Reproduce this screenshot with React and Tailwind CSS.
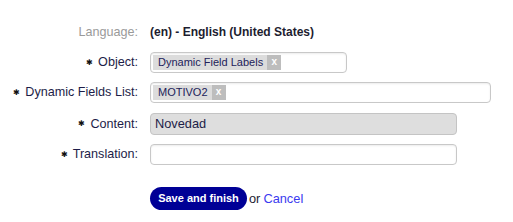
export default function App() {
  const font = { fontFamily: '"Liberation Sans", Arial, sans-serif' };
  const Label = ({ children, req, gray }) => (
    <div className="w-[138px] shrink-0 flex items-center justify-end">
      {req && <span className="text-[8px] text-[#111] mr-[5px] leading-none">✱</span>}
      <span className={`text-[12.6px] leading-none ${gray ? "text-[#9a9a9a]" : "text-[#1d1d48]"}`}>{children}</span>
    </div>
  );
  const Tag = ({ children }) => (
    <div className="flex items-stretch h-[15px] bg-[#dcdcdc] ml-[2px]">
      <span className="pl-[5px] pr-[4px] text-[11px] leading-[15px] text-[#22225a]">{children}</span>
      <span className="w-[14px] bg-[#bdbdbd] text-white text-[10px] font-bold leading-[14px] text-center">x</span>
    </div>
  );
  return (
    <div className="w-[513px] h-[222px] bg-white relative" style={font}>
      <div className="flex flex-col pt-[21px]">
        <div className="flex h-[22px] items-center">
          <Label gray>Language:</Label>
          <div className="ml-[12px] text-[12px] font-bold text-[#1d1d30]">(en) - English (United States)</div>
        </div>
        <div className="flex h-[21px] mt-[9px]">
          <Label req>Object:</Label>
          <div className="ml-[12px] w-[197px] border border-[#c8c8c8] rounded-[4px] flex items-center shadow-[inset_0_1px_2px_rgba(0,0,0,0.08)]">
            <Tag>Dynamic Field Labels</Tag>
          </div>
        </div>
        <div className="flex h-[21px] mt-[9px]">
          <Label req>Dynamic Fields List:</Label>
          <div className="ml-[12px] w-[341px] border border-[#c8c8c8] rounded-[4px] flex items-center shadow-[inset_0_1px_2px_rgba(0,0,0,0.08)]">
            <Tag>MOTIVO2</Tag>
          </div>
        </div>
        <div className="flex h-[22px] mt-[10px]">
          <Label req>Content:</Label>
          <div className="ml-[12px] w-[307px] border border-[#c4c4c4] rounded-[4px] bg-[#dedede] flex items-center pl-[4px] text-[12.8px] text-[#1d1d48]">
            Novedad
          </div>
        </div>
        <div className="flex h-[21px] mt-[9px]">
          <Label req>Translation:</Label>
          <div className="ml-[12px] w-[307px] border border-[#c8c8c8] rounded-[4px] bg-white shadow-[inset_0_1px_2px_rgba(0,0,0,0.08)]"></div>
        </div>
        <div className="flex h-[23px] mt-[22px] items-center">
          <div className="w-[150px] shrink-0"></div>
          <button className="h-[23px] w-[97px] rounded-full bg-[#000096] text-white text-[11px] font-bold">Save and finish</button>
          <span className="ml-[2px] text-[12.8px] text-[#1d1d30]">or</span>
          <span className="ml-[3px] text-[12.8px] text-[#3b3bf0]">Cancel</span>
        </div>
      </div>
    </div>
  );
}
